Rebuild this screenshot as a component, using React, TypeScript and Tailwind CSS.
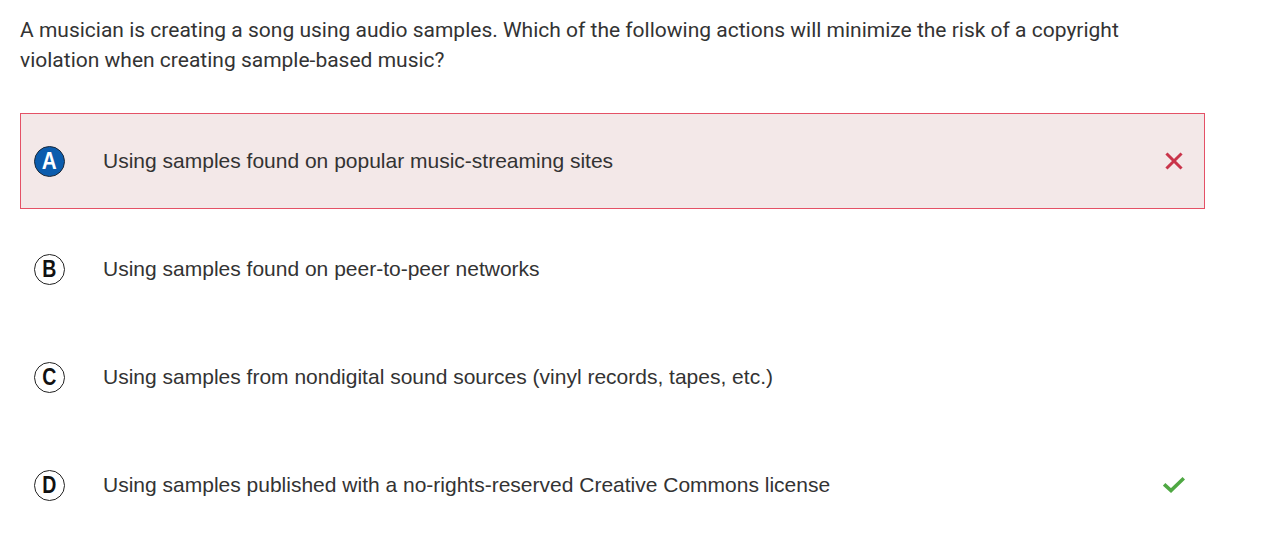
const OPTIONS = [
  { letter: "A", text: "Using samples found on popular music-streaming sites", state: "wrong" },
  { letter: "B", text: "Using samples found on peer-to-peer networks", state: "" },
  { letter: "C", text: "Using samples from nondigital sound sources (vinyl records, tapes, etc.)", state: "" },
  { letter: "D", text: "Using samples published with a no-rights-reserved Creative Commons license", state: "correct" },
];

function CrossIcon() {
  return (
    <svg width="18" height="18" viewBox="0 0 18 18">
      <path d="M2.5 2.5 L15.5 15.5 M15.5 2.5 L2.5 15.5" stroke="#c9344a" strokeWidth="3" strokeLinecap="square" />
    </svg>
  );
}

function CheckIcon() {
  return (
    <svg width="22" height="18" viewBox="0 0 22 18">
      <path d="M2.5 9.5 L8 14.5 L19.5 3.5" stroke="#4fa843" strokeWidth="3.6" fill="none" strokeLinecap="square" />
    </svg>
  );
}

export default function App() {
  return (
    <div className="bg-white w-[1263px] h-[537px] px-5 pt-[15px] text-[#333333]">
      <p className="font-['Roboto',sans-serif] text-[21px] leading-[30px] text-[#333333] w-[1140px]">
        A musician is creating a song using audio samples. Which of the following actions will minimize the risk of a copyright violation when creating sample-based music?
      </p>
      <div className="mt-[38px] w-[1185px] flex flex-col gap-3">
        {OPTIONS.map((o) => (
          <div
            key={o.letter}
            className={`h-[96px] flex items-center pl-[13px] pr-[19px] border ${
              o.state === "wrong" ? "border-[#e45166] bg-[#f3e8e8]" : "border-transparent"
            }`}
          >
            {o.state === "wrong" ? (
              <span className="w-[31px] h-[31px] rounded-full bg-[#0b5cad] border border-[#1d2a3a] flex items-center justify-center text-white font-bold text-[23px] font-['Liberation_Sans',Arial,sans-serif] leading-none">
                <span className="inline-block scale-x-[0.9]">{o.letter}</span>
              </span>
            ) : (
              <span className="w-[31px] h-[31px] rounded-full border border-[#222] flex items-center justify-center text-[#111] font-bold text-[23px] font-['Liberation_Sans',Arial,sans-serif] leading-none">
                <span className="inline-block scale-x-[0.85]">{o.letter}</span>
              </span>
            )}
            <span className="ml-[38px] flex-1 font-['Liberation_Sans',Arial,sans-serif] text-[21px] text-[#333333]">
              {o.text}
            </span>
            <span className="w-[22px] flex items-center justify-center">
              {o.state === "wrong" && <CrossIcon />}
              {o.state === "correct" && <CheckIcon />}
            </span>
          </div>
        ))}
      </div>
    </div>
  );
}
